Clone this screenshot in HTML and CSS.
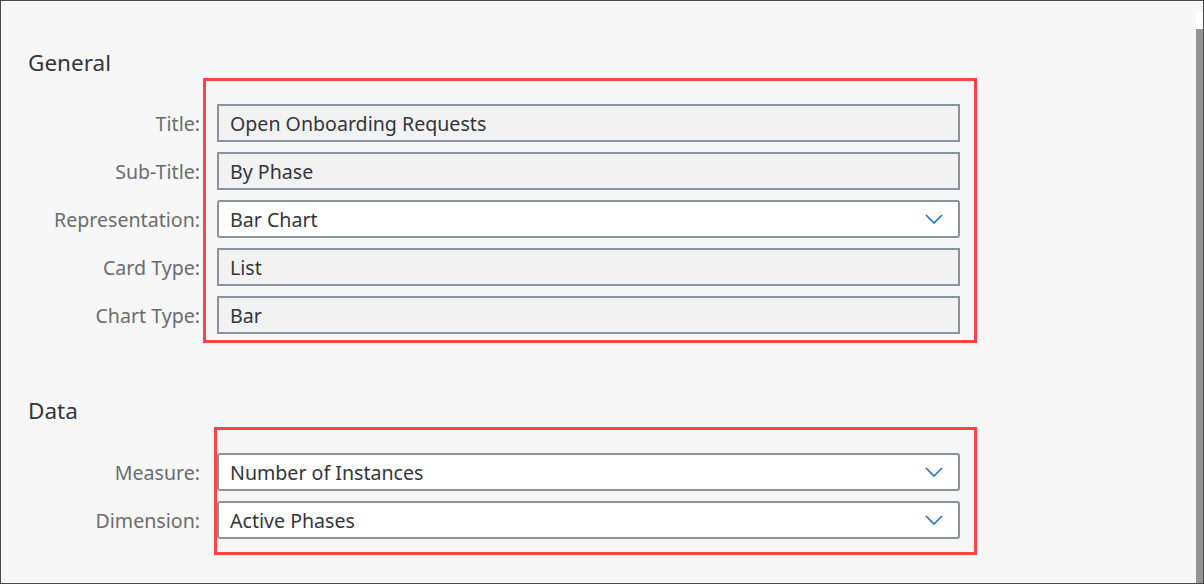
FILE: index.html
```html
<!DOCTYPE html>
<html>
<head>
<meta charset="utf-8">
<link rel="stylesheet" href="styles.css">
</head>
<body>
<div class="frame">
  <main class="content">
    <section class="section general">
      <h2 class="heading">General</h2>
      <div class="group group-general">
        <div class="row"><label class="label">Title:</label><div class="field readonly">Open Onboarding Requests</div></div>
        <div class="row"><label class="label">Sub-Title:</label><div class="field readonly">By Phase</div></div>
        <div class="row"><label class="label">Representation:</label><div class="field select">Bar Chart<svg class="chev" width="18" height="10" viewBox="0 0 18 10"><polyline points="1,1 9,9 17,1" /></svg></div></div>
        <div class="row"><label class="label">Card Type:</label><div class="field readonly">List</div></div>
        <div class="row"><label class="label">Chart Type:</label><div class="field readonly">Bar</div></div>
      </div>
    </section>
    <section class="section data">
      <h2 class="heading">Data</h2>
      <div class="group group-data">
        <div class="row"><label class="label">Measure:</label><div class="field select">Number of Instances<svg class="chev" width="18" height="10" viewBox="0 0 18 10"><polyline points="1,1 9,9 17,1" /></svg></div></div>
        <div class="row"><label class="label">Dimension:</label><div class="field select">Active Phases<svg class="chev" width="18" height="10" viewBox="0 0 18 10"><polyline points="1,1 9,9 17,1" /></svg></div></div>
      </div>
    </section>
  </main>
  <div class="scrollbar"><div class="scroll-gap"></div><div class="scroll-top"></div><div class="scroll-thumb"></div></div>
</div>
</body>
</html>
```

FILE: styles.css
```css
*, *::before, *::after { box-sizing: border-box; }
html, body { margin: 0; padding: 0; }
body {
  width: 1204px;
  height: 584px;
  overflow: hidden;
  font-family: "Noto Sans", "Open Sans", sans-serif;
  background: #f7f7f7;
}
.frame {
  width: 1204px;
  height: 584px;
  border: 1px solid #4a4a4a;
  display: flex;
  background: #f7f7f7;
}
.content {
  flex: 1;
  padding-top: 48px;
}
.heading {
  margin: 0;
  padding-left: 27px;
  font-size: 22.5px;
  font-weight: 400;
  line-height: 28px;
  color: #32363a;
}
.group {
  position: relative;
  display: flex;
  flex-direction: column;
  gap: 10px;
  margin-top: 27px;
}
.group::before {
  content: "";
  position: absolute;
  border: 3px solid #fd4343;
  pointer-events: none;
}
.group-general::before {
  top: -26px;
  bottom: -9px;
  left: 202px;
  width: 774px;
}
.data { margin-top: 63px; }
.group-data { margin-top: 28px; }
.group-data::before {
  top: -26px;
  bottom: -16px;
  left: 213px;
  width: 763px;
}
.row {
  display: flex;
  align-items: center;
  gap: 17px;
  height: 38px;
}
.label {
  width: 199px;
  text-align: right;
  font-size: 19.6px;
  color: #6a6d70;
  white-space: nowrap;
}
.field {
  width: 743px;
  height: 38px;
  border: 2px solid #8a929b;
  display: flex;
  align-items: center;
  justify-content: space-between;
  padding: 0 15px 0 11px;
  font-size: 19.6px;
  color: #32363a;
}
.readonly { background: #f2f2f2; }
.select { background: #ffffff; border-radius: 3px; }
.chev polyline {
  fill: none;
  stroke: #1f6fbf;
  stroke-width: 1.6;
}
.scrollbar {
  width: 7px;
  display: flex;
  flex-direction: column;
}
.scroll-gap { height: 11px; }
.scroll-top { height: 17px; background: #ffffff; }
.scroll-thumb { flex: 1; background: #939393; }
```
